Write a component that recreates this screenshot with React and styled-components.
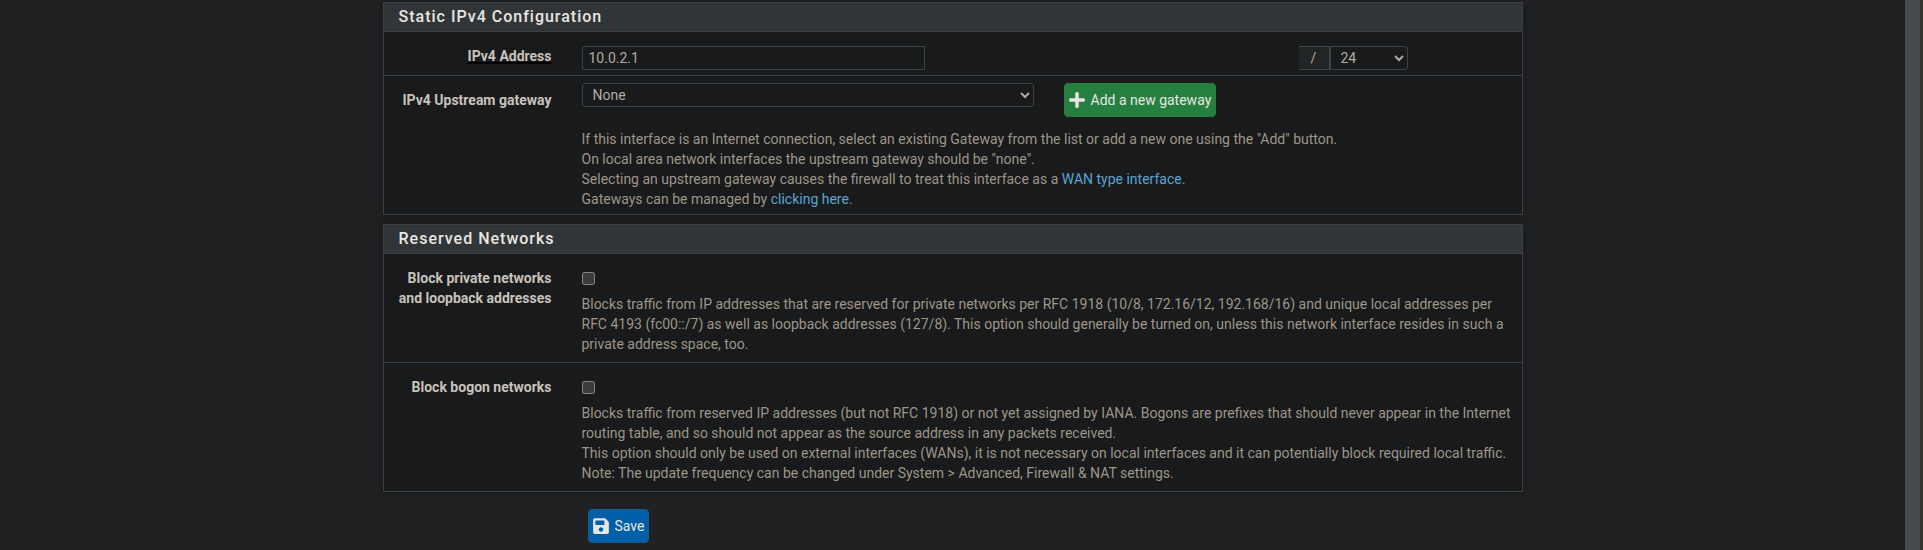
import React from "react";
import styled, { createGlobalStyle } from "styled-components";
import { FaPlus, FaSave } from "react-icons/fa";

const GlobalStyle = createGlobalStyle`
  *, *::before, *::after { box-sizing: border-box; }
  body {
    margin: 0;
    background: #1f2122;
    color: #c8c3bc;
    color-scheme: dark;
    font: 14px/20px Roboto, "Liberation Sans", sans-serif;
  }
  input, select, button { font: inherit; margin: 0; }
`;

const Page = styled.div`
  display: flex;
  min-height: 100vh;
`;

const ScrollRail = styled.div`
  flex: none;
  width: 18px;
  background: #454a4d;
  border-right: 3px solid #33332f;
`;

const Content = styled.main`
  flex: 1;
  min-width: 0;
  padding: 2px 15px 0;
`;

const Form = styled.form`
  max-width: 1140px;
  margin: 0 auto;
`;

const Panel = styled.section`
  margin-bottom: 9px;
  background: #181a1b;
  border: 1px solid #3b3f41;
  box-shadow: 0 1px 10px rgba(0, 0, 0, 0.3);
`;

const PanelTitle = styled.h2`
  margin: 0;
  padding: 4px 15px;
  background: #313537;
  border-bottom: 1px solid #3b3f41;
  color: #e8e6e3;
  font-size: 16px;
  font-weight: 500;
  line-height: 20px;
  letter-spacing: 1px;
`;

const Row = styled.div`
  display: grid;
  grid-template-columns: 168px minmax(0, 1fr);
  column-gap: 30px;
  padding: ${(p) => p.$pad};
  & + & { border-top: 1px solid #3b3f41; }
`;

const Label = styled.label`
  padding-top: ${(p) => p.$top || 0}px;
  text-align: right;
  font-weight: 700;
`;

const Required = styled.span`
  text-decoration: underline 2px #000;
  text-underline-offset: 1px;
`;

const AddressFields = styled.div`
  display: flex;
  justify-content: space-between;
  padding-right: 104px;
`;

const GatewayFields = styled.div`
  display: flex;
  align-items: flex-start;
  gap: 30px;
`;

const TextInput = styled.input`
  flex: 0 1 343px;
  min-width: 0;
  height: 24px;
  padding: 0 6px;
  background: #181a1b;
  color: #b2aca2;
  border: 1px solid #3e4446;
  border-radius: 3px 0 0 3px;
`;

const Select = styled.select`
  width: ${(p) => p.$width}px;
  min-width: 0;
  height: 24px;
  padding: 0 6px;
  background: #181a1b;
  color: #b2aca2;
  border: 1px solid #3e4446;
  border-radius: ${(p) => (p.$joined ? "0 3px 3px 0" : "3px")};
`;

const MaskGroup = styled.div`
  display: flex;
`;

const Addon = styled.span`
  width: 31px;
  height: 24px;
  background: #222526;
  border: 1px solid #3e4446;
  border-left: 0;
  color: #b2aca2;
  line-height: 22px;
  text-align: center;
`;

const Button = styled.button`
  display: flex;
  align-items: center;
  gap: 6px;
  height: 34px;
  padding: 0 4px;
  background: ${(p) => p.$bg};
  color: #e8e6e3;
  border: 1px solid ${(p) => p.$edge};
  border-radius: 4px;
  white-space: nowrap;
  svg { width: 16px; height: 18px; }
`;

const Help = styled.p`
  margin: ${(p) => p.$top}px 0 0;
  color: #9e9689;
`;

const Link = styled.a`
  color: #5ba4d6;
  text-decoration: none;
`;

const Checkbox = styled.input`
  && {
    display: block;
    width: 13px;
    height: 13px;
    margin-top: 4px;
  }
`;

const Actions = styled.div`
  padding: 8px 0 0 205px;
`;

export default function App() {
  return (
    <Page>
      <GlobalStyle />
      <Content>
        <Form onSubmit={(e) => e.preventDefault()}>
          <Panel>
            <PanelTitle>Static IPv4 Configuration</PanelTitle>
            <Row $pad="14px 10px 5px 0">
              <Label htmlFor="ipaddr">
                <Required>IPv4 Address</Required>
              </Label>
              <AddressFields>
                <TextInput id="ipaddr" type="text" defaultValue="10.0.2.1" />
                <MaskGroup>
                  <Addon>/</Addon>
                  <Select $width={78} $joined aria-label="Subnet mask" defaultValue="24">
                    <option>32</option>
                    <option>24</option>
                    <option>16</option>
                    <option>8</option>
                  </Select>
                </MaskGroup>
              </AddressFields>
            </Row>
            <Row $pad="7px 10px 5px 0">
              <Label htmlFor="gateway" $top={7}>IPv4 Upstream gateway</Label>
              <div>
                <GatewayFields>
                  <Select id="gateway" $width={452}>
                    <option>None</option>
                  </Select>
                  <Button type="button" $bg="#25803f" $edge="#25803f">
                    <FaPlus />
                    Add a new gateway
                  </Button>
                </GatewayFields>
                <Help $top={12}>
                  If this interface is an Internet connection, select an existing Gateway from the
                  list or add a new one using the "Add" button.
                  <br />
                  On local area network interfaces the upstream gateway should be "none".
                  <br />
                  Selecting an upstream gateway causes the firewall to treat this interface as
                  a <Link href="#wan">WAN type interface</Link>.
                  <br />
                  Gateways can be managed by <Link href="#gateways">clicking here</Link>.
                </Help>
              </div>
            </Row>
          </Panel>

          <Panel>
            <PanelTitle>Reserved Networks</PanelTitle>
            <Row $pad="14px 10px 8px 0">
              <Label htmlFor="blockpriv">
                Block private networks
                <br />
                and loopback addresses
              </Label>
              <div>
                <Checkbox id="blockpriv" type="checkbox" />
                <Help $top={9}>
                  Blocks traffic from IP addresses that are reserved for private networks per RFC
                  1918 (10/8, 172.16/12, 192.168/16) and unique local addresses per RFC 4193
                  (fc00::/7) as well as loopback addresses (127/8). This option should generally be
                  turned on, unless this network interface resides in such a private address space,
                  too.
                </Help>
              </div>
            </Row>
            <Row $pad="14px 10px 8px 0">
              <Label htmlFor="blockbogons">Block bogon networks</Label>
              <div>
                <Checkbox id="blockbogons" type="checkbox" />
                <Help $top={9}>
                  Blocks traffic from reserved IP addresses (but not RFC 1918) or not yet assigned
                  by IANA. Bogons are prefixes that should never appear in the Internet routing
                  table, and so should not appear as the source address in any packets received.
                  <br />
                  This option should only be used on external interfaces (WANs), it is not necessary
                  on local interfaces and it can potentially block required local traffic.
                  <br />
                  Note: The update frequency can be changed under System &gt; Advanced, Firewall
                  &amp; NAT settings.
                </Help>
              </div>
            </Row>
          </Panel>

          <Actions>
            <Button type="submit" $bg="#005fa8" $edge="#1a5c8c">
              <FaSave />
              Save
            </Button>
          </Actions>
        </Form>
      </Content>
      <ScrollRail aria-hidden="true" />
    </Page>
  );
}
